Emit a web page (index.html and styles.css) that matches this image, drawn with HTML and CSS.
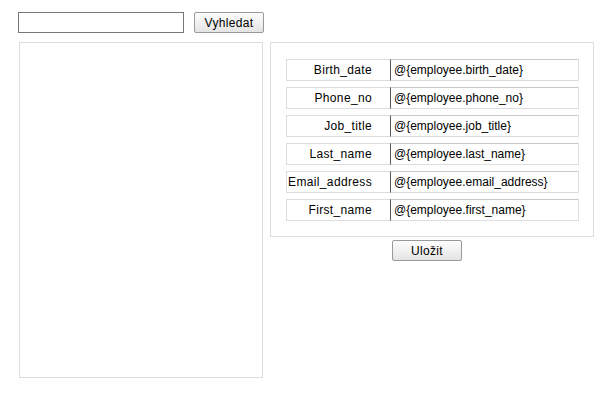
FILE: index.html
```html
<!DOCTYPE html>
<html lang="cs">
<head>
    <meta charset="UTF-8">
    <title>Employees</title>
    <link rel="stylesheet" href="styles.css">
</head>
<body>

    <div class="search">
        <input type="text" class="search-input">
        <button class="btn">Vyhledat</button>
    </div>

    <div class="main">
        <div class="list"></div>

        <div class="detail">
            <form class="form-box">
                <div class="row">
                    <span class="label">Birth_date</span>
                    <span class="value">@{employee.birth_date}</span>
                </div>
                <div class="row">
                    <span class="label">Phone_no</span>
                    <span class="value">@{employee.phone_no}</span>
                </div>
                <div class="row">
                    <span class="label">Job_title</span>
                    <span class="value">@{employee.job_title}</span>
                </div>
                <div class="row">
                    <span class="label">Last_name</span>
                    <span class="value">@{employee.last_name}</span>
                </div>
                <div class="row">
                    <span class="label">Email_address</span>
                    <span class="value">@{employee.email_address}</span>
                </div>
                <div class="row">
                    <span class="label">First_name</span>
                    <span class="value">@{employee.first_name}</span>
                </div>
            </form>
            <div class="actions">
                <button class="btn">Uložit</button>
            </div>
        </div>
    </div>

</body>
</html>
```

FILE: styles.css
```css
/* General */
* {
    margin: 0;
    padding: 0;
    box-sizing: border-box;
    font-family: 'Liberation Sans', Arial, sans-serif;
}

body {
    background: #fff;
    color: #000;
    font-size: 12px;
    padding: 12px 0 0 18px;
}

/* Search bar */
.search {
    display: flex;
    align-items: center;
    height: 21px;
}

.search-input {
    width: 166px;
    height: 21px;
    border: 1px solid #777;
    outline: none;
    margin-right: 10px;
}

.btn {
    width: 70px;
    height: 21px;
    border: 1px solid #9a9a9a;
    border-radius: 2px;
    background: linear-gradient(#fdfdfd, #e4e4e4);
    font-size: 12px;
    letter-spacing: 0.35px;
    color: #000;
    cursor: pointer;
}

/* Main area */
.main {
    display: flex;
    align-items: flex-start;
    margin-top: 9px;
}

.list {
    width: 244px;
    height: 336px;
    margin-left: 1px;
    border: 1px solid #ddd;
}

.detail {
    width: 324px;
    margin-left: 7px;
}

.form-box {
    border: 1px solid #ddd;
    padding: 16px 14px 15px 15px;
    display: flex;
    flex-direction: column;
    gap: 6px;
}

.row {
    display: flex;
    height: 22px;
}

.label {
    width: 104px;
    border: 1px solid #ddd;
    border-right: none;
    display: flex;
    align-items: center;
    justify-content: flex-end;
    padding-right: 18px;
    letter-spacing: 0.35px;
    white-space: nowrap;
}

.value {
    flex: 1;
    border: 1px solid #ddd;
    border-top-color: #c8c8c8;
    border-left: 1px solid #555;
    display: flex;
    align-items: center;
    padding-left: 3px;
}

.actions {
    display: flex;
    justify-content: center;
    margin-top: 3px;
    padding-right: 10px;
}
```
